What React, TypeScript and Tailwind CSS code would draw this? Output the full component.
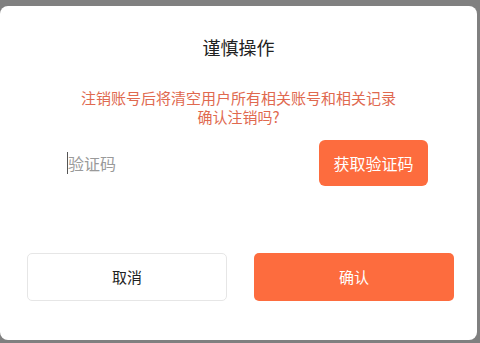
export default function App() {
  const font = { fontFamily: '"Noto Sans CJK SC", "Noto Sans", sans-serif' }
  return (
    <div className="w-[480px] h-[343px] bg-[#808080] pt-[6px] pr-[3px] pb-[3px]" style={font}>
      <div className="w-[477px] h-[334px] bg-white rounded-[8px] flex flex-col">
        {/* Title */}
        <div className="pt-[28px] text-center text-[18px] leading-[26px] text-[#222]">谨慎操作</div>

        {/* Warning */}
        <div className="mt-[28px] text-center text-[15px] leading-[19px] text-[#e0694f]">
          <div>注销账号后将清空用户所有相关账号和相关记录</div>
          <div>确认注销吗?</div>
        </div>

        {/* Code input */}
        <div className="mt-[14px] flex items-center justify-between pl-[67px] pr-[49px]">
          <div className="flex items-center text-[16px] text-[#9a9a9a]">
            <span className="w-px h-[22px] bg-[#555]" />
            <span>验证码</span>
          </div>
          <button className="w-[109px] h-[46px] shrink-0 rounded-[6px] bg-[#fd6c3e] text-white text-[16px]">
            获取验证码
          </button>
        </div>

        {/* Actions */}
        <div className="mt-[67px] flex gap-[27px] pl-[27px]">
          <button className="w-[200px] h-[48px] shrink-0 rounded-[5px] border border-[#e6e6e6] bg-white text-[15px] text-[#222]">
            取消
          </button>
          <button className="w-[200px] h-[48px] shrink-0 rounded-[5px] bg-[#fd6c3e] text-[15px] text-white">
            确认
          </button>
        </div>
      </div>
    </div>
  )
}
